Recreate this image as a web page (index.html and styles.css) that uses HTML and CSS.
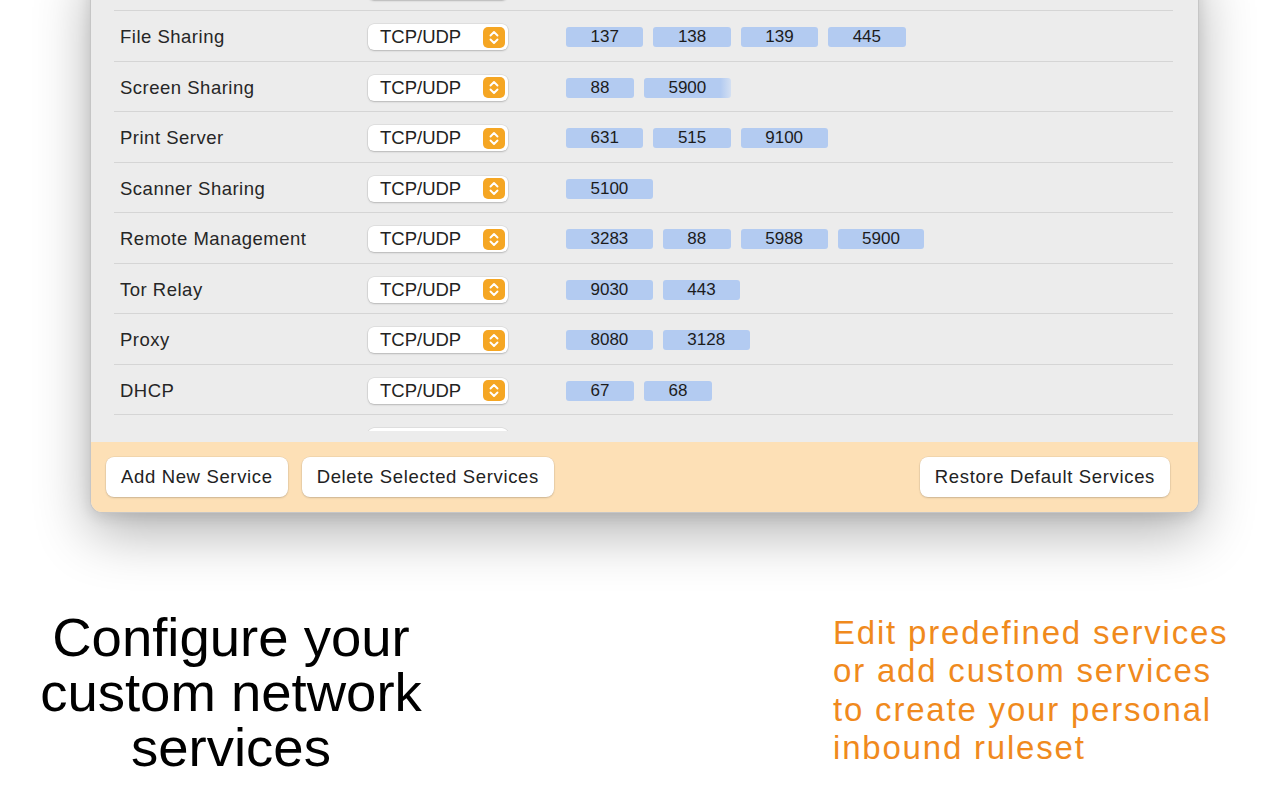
FILE: index.html
```html
<!DOCTYPE html>
<html lang="en">
<head>
<meta charset="utf-8">
<title>Services</title>
<link rel="stylesheet" href="styles.css">
</head>
<body>
<div class="window">
  <div class="services">
    <div class="row">
      <span class="name">Remote Login</span>
      <span class="popup"><span class="popup-label">TCP/UDP</span><span class="stepper"><svg viewBox="0 0 22 21" width="22" height="21"><path d="M7.5 8.5 11 5 14.5 8.5M7.5 12.5 11 16 14.5 12.5" fill="none" stroke="#fff" stroke-width="1.9" stroke-linecap="round" stroke-linejoin="round"/></svg></span></span>
      <span class="ports"><span class="port">22</span></span>
    </div>
    <div class="row">
      <span class="name">File Sharing</span>
      <span class="popup"><span class="popup-label">TCP/UDP</span><span class="stepper"><svg viewBox="0 0 22 21" width="22" height="21"><path d="M7.5 8.5 11 5 14.5 8.5M7.5 12.5 11 16 14.5 12.5" fill="none" stroke="#fff" stroke-width="1.9" stroke-linecap="round" stroke-linejoin="round"/></svg></span></span>
      <span class="ports"><span class="port">137</span><span class="port">138</span><span class="port">139</span><span class="port">445</span></span>
    </div>
    <div class="row">
      <span class="name">Screen Sharing</span>
      <span class="popup"><span class="popup-label">TCP/UDP</span><span class="stepper"><svg viewBox="0 0 22 21" width="22" height="21"><path d="M7.5 8.5 11 5 14.5 8.5M7.5 12.5 11 16 14.5 12.5" fill="none" stroke="#fff" stroke-width="1.9" stroke-linecap="round" stroke-linejoin="round"/></svg></span></span>
      <span class="ports"><span class="port">88</span><span class="port port-editing">5900</span></span>
    </div>
    <div class="row">
      <span class="name">Print Server</span>
      <span class="popup"><span class="popup-label">TCP/UDP</span><span class="stepper"><svg viewBox="0 0 22 21" width="22" height="21"><path d="M7.5 8.5 11 5 14.5 8.5M7.5 12.5 11 16 14.5 12.5" fill="none" stroke="#fff" stroke-width="1.9" stroke-linecap="round" stroke-linejoin="round"/></svg></span></span>
      <span class="ports"><span class="port">631</span><span class="port">515</span><span class="port">9100</span></span>
    </div>
    <div class="row">
      <span class="name">Scanner Sharing</span>
      <span class="popup"><span class="popup-label">TCP/UDP</span><span class="stepper"><svg viewBox="0 0 22 21" width="22" height="21"><path d="M7.5 8.5 11 5 14.5 8.5M7.5 12.5 11 16 14.5 12.5" fill="none" stroke="#fff" stroke-width="1.9" stroke-linecap="round" stroke-linejoin="round"/></svg></span></span>
      <span class="ports"><span class="port">5100</span></span>
    </div>
    <div class="row">
      <span class="name">Remote Management</span>
      <span class="popup"><span class="popup-label">TCP/UDP</span><span class="stepper"><svg viewBox="0 0 22 21" width="22" height="21"><path d="M7.5 8.5 11 5 14.5 8.5M7.5 12.5 11 16 14.5 12.5" fill="none" stroke="#fff" stroke-width="1.9" stroke-linecap="round" stroke-linejoin="round"/></svg></span></span>
      <span class="ports"><span class="port">3283</span><span class="port">88</span><span class="port">5988</span><span class="port">5900</span></span>
    </div>
    <div class="row">
      <span class="name">Tor Relay</span>
      <span class="popup"><span class="popup-label">TCP/UDP</span><span class="stepper"><svg viewBox="0 0 22 21" width="22" height="21"><path d="M7.5 8.5 11 5 14.5 8.5M7.5 12.5 11 16 14.5 12.5" fill="none" stroke="#fff" stroke-width="1.9" stroke-linecap="round" stroke-linejoin="round"/></svg></span></span>
      <span class="ports"><span class="port">9030</span><span class="port">443</span></span>
    </div>
    <div class="row">
      <span class="name">Proxy</span>
      <span class="popup"><span class="popup-label">TCP/UDP</span><span class="stepper"><svg viewBox="0 0 22 21" width="22" height="21"><path d="M7.5 8.5 11 5 14.5 8.5M7.5 12.5 11 16 14.5 12.5" fill="none" stroke="#fff" stroke-width="1.9" stroke-linecap="round" stroke-linejoin="round"/></svg></span></span>
      <span class="ports"><span class="port">8080</span><span class="port">3128</span></span>
    </div>
    <div class="row">
      <span class="name">DHCP</span>
      <span class="popup"><span class="popup-label">TCP/UDP</span><span class="stepper"><svg viewBox="0 0 22 21" width="22" height="21"><path d="M7.5 8.5 11 5 14.5 8.5M7.5 12.5 11 16 14.5 12.5" fill="none" stroke="#fff" stroke-width="1.9" stroke-linecap="round" stroke-linejoin="round"/></svg></span></span>
      <span class="ports"><span class="port">67</span><span class="port">68</span></span>
    </div>
    <div class="row">
      <span class="name">DNS</span>
      <span class="popup"><span class="popup-label">TCP/UDP</span><span class="stepper"><svg viewBox="0 0 22 21" width="22" height="21"><path d="M7.5 8.5 11 5 14.5 8.5M7.5 12.5 11 16 14.5 12.5" fill="none" stroke="#fff" stroke-width="1.9" stroke-linecap="round" stroke-linejoin="round"/></svg></span></span>
      <span class="ports"><span class="port">53</span></span>
    </div>
  </div>
  <div class="footer">
    <button class="btn">Add New Service</button>
    <button class="btn">Delete Selected Services</button>
    <button class="btn btn-right">Restore Default Services</button>
  </div>
</div>

<div class="captions">
  <p class="headline">Configure your<br>custom network<br>services</p>
  <p class="blurb">Edit predefined services<br>or add custom services<br>to create your personal<br>inbound ruleset</p>
</div>
</body>
</html>
```

FILE: styles.css
```css
html, body {
  margin: 0;
  padding: 0;
}

body {
  width: 1286px;
  height: 804px;
  overflow: hidden;
  background: #ffffff;
  font-family: "Liberation Sans", Arial, sans-serif;
}

/* Settings window, top scrolled out of view */
.window {
  box-sizing: border-box;
  width: 1109px;
  margin: -39.5px 0 0 90px;
  background: #ececec;
  border: 1px solid #c6c6c6;
  border-top: none;
  border-radius: 0 0 12px 12px;
  box-shadow: 0 20px 55px rgba(0, 0, 0, 0.3), 0 4px 14px rgba(0, 0, 0, 0.1);
  overflow: hidden;
}

.services {
  height: 470.5px;
  margin: 0 25px 11px 23px;
  overflow: hidden;
}

.row {
  box-sizing: border-box;
  height: 50.5px;
  padding-top: 3px;
  display: flex;
  align-items: center;
  border-bottom: 1px solid #d5d5d5;
}

.name {
  width: 248px;
  padding-left: 6px;
  font-size: 18.5px;
  letter-spacing: 0.5px;
  color: #262626;
}

/* Protocol pop-up button */
.popup {
  box-sizing: border-box;
  width: 140px;
  height: 26px;
  display: flex;
  align-items: center;
  justify-content: space-between;
  padding: 0 3px 0 12px;
  background: #ffffff;
  border-radius: 6px;
  box-shadow: 0 0 0 0.5px rgba(0, 0, 0, 0.1), 0 1px 2px rgba(0, 0, 0, 0.18);
}

.popup-label {
  font-size: 18.5px;
  color: #222;
}

.stepper {
  display: flex;
  width: 22px;
  height: 21px;
  background: #f5a623;
  border-radius: 5px;
}

/* Port tokens */
.ports {
  display: flex;
  gap: 10px;
  margin-left: 58px;
}

.port {
  height: 20px;
  line-height: 20px;
  padding: 0 24.5px;
  background: #b3cbf1;
  border-radius: 3px;
  font-size: 17px;
  color: #1c1c1c;
  text-align: center;
}

.port-editing {
  background: linear-gradient(to right, #b3cbf1 88%, #d4e0f2);
}

/* Bottom action bar */
.footer {
  display: flex;
  gap: 14px;
  height: 69.5px;
  box-sizing: border-box;
  padding: 15px 28px 0 15px;
  background: #fde0b6;
}

.btn {
  height: 40px;
  padding: 0 15px;
  border: none;
  border-radius: 8px;
  background: #ffffff;
  box-shadow: 0 0 0 0.5px rgba(0, 0, 0, 0.08), 0 1px 2px rgba(0, 0, 0, 0.16);
  font-family: "Liberation Sans", Arial, sans-serif;
  font-size: 18.5px;
  letter-spacing: 0.65px;
  color: #222;
}

.btn-right {
  margin-left: auto;
}

/* Marketing captions */
.captions {
  display: flex;
  align-items: flex-start;
  margin-top: 97px;
}

.headline {
  width: 462px;
  margin: 0;
  text-align: center;
  font-size: 54.5px;
  line-height: 55px;
  color: #000;
}

.blurb {
  margin: 4px 0 0 371px;
  font-size: 33px;
  line-height: 38.5px;
  letter-spacing: 1.8px;
  color: #f08a1d;
}
```
